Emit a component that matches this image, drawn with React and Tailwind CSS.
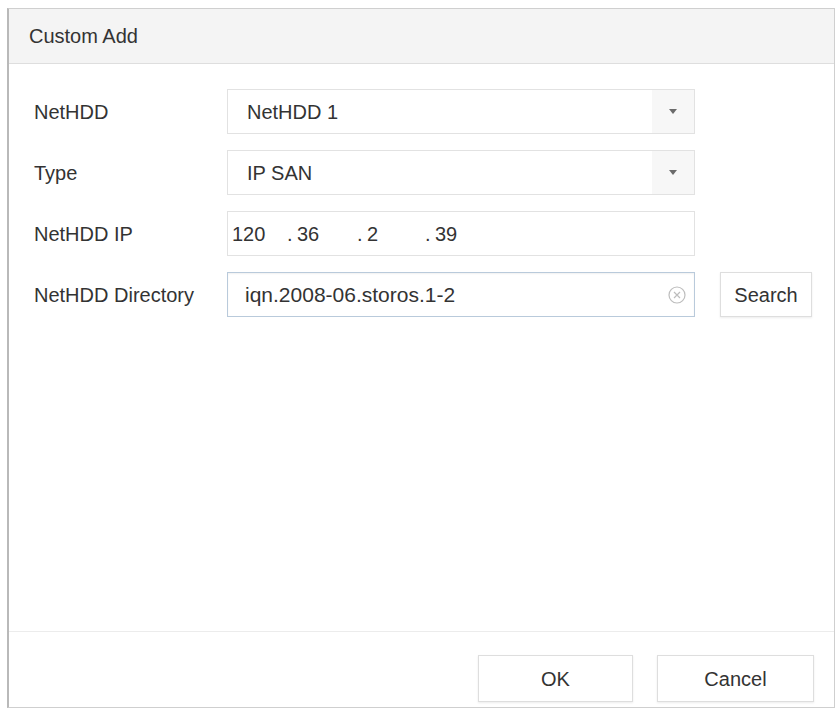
import React from "react";

const font = { fontFamily: '"Liberation Sans", Arial, sans-serif' };

function Caret() {
  return (
    <span className="flex h-full w-[42px] items-center justify-center bg-[#f7f7f7]">
      <svg width="8" height="5" viewBox="0 0 8 5" aria-hidden="true">
        <path d="M0 0 L8 0 L4 5 Z" fill="#6b6b6b" />
      </svg>
    </span>
  );
}

function Select({ value }) {
  return (
    <div className="flex h-[45px] w-[468px] items-center justify-between border border-[#e2e2e2] bg-white pl-[19px]">
      <span>{value}</span>
      <Caret />
    </div>
  );
}

function Row({ label, children }) {
  return (
    <div className="flex h-[45px] items-center">
      <span className="w-[193px] shrink-0">{label}</span>
      {children}
    </div>
  );
}

function ClearIcon() {
  return (
    <svg width="18" height="18" viewBox="0 0 18 18" aria-hidden="true">
      <circle cx="9" cy="9" r="8" fill="none" stroke="#bdbdbd" strokeWidth="1.2" />
      <path d="M6 6 L12 12 M12 6 L6 12" stroke="#bdbdbd" strokeWidth="1.2" />
    </svg>
  );
}

export default function App() {
  const octets = [
    { v: "120", w: "w-[55px]" },
    { v: "36", w: "w-[60px]" },
    { v: "2", w: "w-[58px]" },
    { v: "39", w: "w-[58px]" },
  ];

  return (
    <div
      className="h-[712px] w-[837px] overflow-hidden bg-white pl-[7px] pt-[8px] text-[20px] text-[#333]"
      style={font}
    >
      <div className="flex h-[700px] w-[828px] flex-col border border-l-2 border-[#cfcfcf] border-l-[#b9b9b9] bg-white">
        {/* Header */}
        <div className="flex h-[55px] shrink-0 items-center border-b border-[#dedede] bg-[#f4f4f4] pl-[20px]">
          Custom Add
        </div>

        {/* Body */}
        <div className="flex flex-1 flex-col gap-[16px] pl-[25px] pt-[25px]">
          <Row label="NetHDD">
            <Select value="NetHDD 1" />
          </Row>
          <Row label="Type">
            <Select value="IP SAN" />
          </Row>
          <Row label="NetHDD IP">
            <div className="flex h-[45px] w-[468px] items-center border border-[#e2e2e2] bg-white pl-[4px]">
              {octets.map((o, i) => (
                <React.Fragment key={i}>
                  {i > 0 && <span className="w-[10px]">.</span>}
                  <span className={o.w}>{o.v}</span>
                </React.Fragment>
              ))}
            </div>
          </Row>
          <Row label="NetHDD Directory">
            <div className="flex h-[45px] w-[468px] items-center justify-between border border-[#b9cadb] bg-white pl-[17px] pr-[8px] shadow-[inset_0_1px_2px_rgba(0,0,0,0.06)]">
              <span className="text-[21px]">iqn.2008-06.storos.1-2</span>
              <ClearIcon />
            </div>
            <button className="ml-[25px] flex h-[45px] w-[92px] items-center justify-center border border-[#dedede] bg-white shadow-[0_1px_2px_rgba(0,0,0,0.08)]">
              Search
            </button>
          </Row>
        </div>

        {/* Footer */}
        <div className="flex h-[76px] shrink-0 justify-end gap-[24px] border-t border-[#ececec] pr-[20px] pt-[23px]">
          <button className="flex h-[47px] w-[155px] items-center justify-center border border-[#dedede] bg-white shadow-[0_1px_2px_rgba(0,0,0,0.08)]">
            OK
          </button>
          <button className="flex h-[47px] w-[157px] items-center justify-center border border-[#dedede] bg-white shadow-[0_1px_2px_rgba(0,0,0,0.08)]">
            Cancel
          </button>
        </div>
      </div>
    </div>
  );
}
